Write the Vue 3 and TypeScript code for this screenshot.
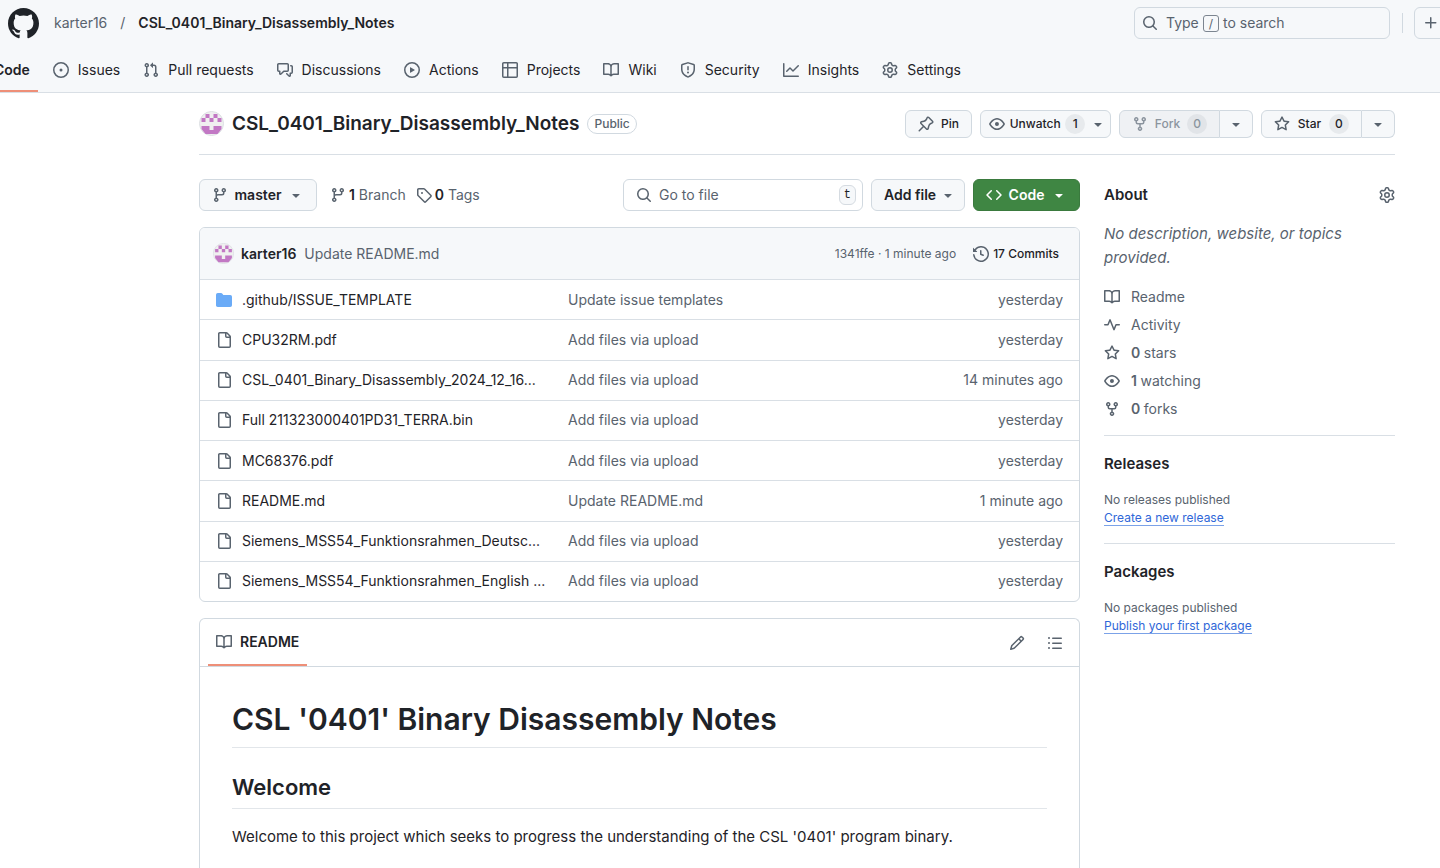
<script setup lang="ts">
import { h } from 'vue'

const paths: Record<string, string> = {
  issue: 'M8 9.5a1.5 1.5 0 1 0 0-3 1.5 1.5 0 0 0 0 3ZM8 0a8 8 0 1 1 0 16A8 8 0 0 1 8 0ZM1.5 8a6.5 6.5 0 1 0 13 0 6.5 6.5 0 0 0-13 0Z',
  pull: 'M1.5 3.25a2.25 2.25 0 1 1 3 2.122v5.256a2.251 2.251 0 1 1-1.5 0V5.372A2.25 2.25 0 0 1 1.5 3.25Zm5.677-.177L9.573.677A.25.25 0 0 1 10 .854V2.5h1A2.5 2.5 0 0 1 13.5 5v5.628a2.251 2.251 0 1 1-1.5 0V5a1 1 0 0 0-1-1h-1v1.646a.25.25 0 0 1-.427.177L7.177 3.427a.25.25 0 0 1 0-.354ZM3.75 2.5a.75.75 0 1 0 0 1.5.75.75 0 0 0 0-1.5Zm0 9.5a.75.75 0 1 0 0 1.5.75.75 0 0 0 0-1.5Zm8.25.75a.75.75 0 1 0 1.5 0 .75.75 0 0 0-1.5 0Z',
  discussion: 'M1.75 1h8.5c.966 0 1.75.784 1.75 1.75v5.5A1.75 1.75 0 0 1 10.25 10H7.061l-2.574 2.573A1.458 1.458 0 0 1 2 11.543V10h-.25A1.75 1.75 0 0 1 0 8.25v-5.5C0 1.784.784 1 1.75 1ZM1.5 2.75v5.5c0 .138.112.25.25.25h1a.75.75 0 0 1 .75.75v2.19l2.72-2.72a.749.749 0 0 1 .53-.22h3.5a.25.25 0 0 0 .25-.25v-5.5a.25.25 0 0 0-.25-.25h-8.5a.25.25 0 0 0-.25.25Zm13 2a.25.25 0 0 0-.25-.25h-.5a.75.75 0 0 1 0-1.5h.5c.966 0 1.75.784 1.75 1.75v5.5A1.75 1.75 0 0 1 14.25 12H14v1.543a1.458 1.458 0 0 1-2.487 1.03L9.22 12.28a.749.749 0 0 1 .326-1.275.749.749 0 0 1 .734.215l2.22 2.22v-2.19a.75.75 0 0 1 .75-.75h1a.25.25 0 0 0 .25-.25Z',
  play: 'M8 0a8 8 0 1 1 0 16A8 8 0 0 1 8 0ZM1.5 8a6.5 6.5 0 1 0 13 0 6.5 6.5 0 0 0-13 0Zm4.879-2.773 4.264 2.559a.25.25 0 0 1 0 .428l-4.264 2.559A.25.25 0 0 1 6 10.559V5.442a.25.25 0 0 1 .379-.215Z',
  table: 'M0 1.75C0 .784.784 0 1.75 0h12.5C15.216 0 16 .784 16 1.75v12.5A1.75 1.75 0 0 1 14.25 16H1.75A1.75 1.75 0 0 1 0 14.25ZM6.5 6.5v8h7.75a.25.25 0 0 0 .25-.25V6.5Zm8-1.5V1.75a.25.25 0 0 0-.25-.25H6.5V5Zm-13 1.5v7.75c0 .138.112.25.25.25H5v-8ZM5 5V1.5H1.75a.25.25 0 0 0-.25.25V5Z',
  book: 'M0 1.75A.75.75 0 0 1 .75 1h4.253c1.227 0 2.317.59 3 1.501A3.743 3.743 0 0 1 11.006 1h4.245a.75.75 0 0 1 .75.75v10.5a.75.75 0 0 1-.75.75h-4.507a2.25 2.25 0 0 0-1.591.659l-.622.621a.75.75 0 0 1-1.06 0l-.622-.621A2.25 2.25 0 0 0 5.258 13H.75a.75.75 0 0 1-.75-.75Zm7.251 10.324.004-5.073-.002-2.253A2.25 2.25 0 0 0 5.003 2.5H1.5v9h3.757a3.75 3.75 0 0 1 1.994.574ZM8.755 4.75l-.004 7.322a3.752 3.752 0 0 1 1.992-.572H14.5v-9h-3.495a2.25 2.25 0 0 0-2.25 2.25Z',
  shield: 'M7.467.133a1.748 1.748 0 0 1 1.066 0l5.25 1.68A1.75 1.75 0 0 1 15 3.48V7c0 1.566-.32 3.182-1.303 4.682-.983 1.498-2.585 2.813-5.032 3.855a1.697 1.697 0 0 1-1.33 0c-2.447-1.042-4.049-2.357-5.032-3.855C1.32 10.182 1 8.566 1 7V3.48a1.75 1.75 0 0 1 1.217-1.667Zm.61 1.429a.25.25 0 0 0-.153 0l-5.25 1.68a.25.25 0 0 0-.174.238V7c0 1.358.275 2.666 1.057 3.86.784 1.194 2.121 2.34 4.366 3.297a.196.196 0 0 0 .154 0c2.245-.956 3.582-2.104 4.366-3.298C13.225 9.666 13.5 8.36 13.5 7V3.48a.251.251 0 0 0-.174-.237l-5.25-1.68ZM8.75 4.75v3a.75.75 0 0 1-1.5 0v-3a.75.75 0 0 1 1.5 0ZM9 10.5a1 1 0 1 1-2 0 1 1 0 0 1 2 0Z',
  graph: 'M1.5 1.75V13.5h13.75a.75.75 0 0 1 0 1.5H.75a.75.75 0 0 1-.75-.75V1.75a.75.75 0 0 1 1.5 0Zm14.28 2.53-5.25 5.25a.75.75 0 0 1-1.06 0L7 7.06 4.28 9.78a.751.751 0 0 1-1.042-.018.751.751 0 0 1-.018-1.042l3.25-3.25a.75.75 0 0 1 1.06 0L10 7.94l4.72-4.72a.751.751 0 0 1 1.042.018.751.751 0 0 1 .018 1.042Z',
  gear: 'M8 0a8.2 8.2 0 0 1 .701.031C9.444.095 9.99.645 10.16 1.29l.288 1.107c.018.066.079.158.212.224.231.114.454.243.668.386.123.082.233.09.299.071l1.103-.303c.644-.176 1.392.021 1.82.63.27.385.506.792.704 1.218.315.675.111 1.422-.364 1.891l-.814.806c-.049.048-.098.147-.088.294.016.257.016.515 0 .772-.01.147.038.246.088.294l.814.806c.475.469.679 1.216.364 1.891a7.977 7.977 0 0 1-.704 1.217c-.428.61-1.176.807-1.82.63l-1.102-.302c-.067-.019-.177-.011-.3.071a5.909 5.909 0 0 1-.668.386c-.133.066-.194.158-.211.224l-.29 1.106c-.168.646-.715 1.196-1.458 1.26a8.006 8.006 0 0 1-1.402 0c-.743-.064-1.289-.614-1.458-1.26l-.289-1.106c-.018-.066-.079-.158-.212-.224a5.738 5.738 0 0 1-.668-.386c-.123-.082-.233-.09-.299-.071l-1.103.303c-.644.176-1.392-.021-1.82-.63a8.12 8.12 0 0 1-.704-1.218c-.315-.675-.111-1.422.363-1.891l.815-.806c.05-.048.098-.147.088-.294a6.214 6.214 0 0 1 0-.772c.01-.147-.038-.246-.088-.294l-.815-.806C.635 6.045.431 5.298.746 4.623a7.92 7.92 0 0 1 .704-1.217c.428-.61 1.176-.807 1.82-.63l1.102.302c.067.019.177.011.3-.071.214-.143.437-.272.668-.386.133-.066.194-.158.211-.224l.29-1.106C6.009.645 6.556.095 7.299.03 7.53.01 7.764 0 8 0Zm-.571 1.525c-.036.003-.108.036-.137.146l-.289 1.105c-.147.561-.549.967-.998 1.189-.173.086-.34.183-.5.29-.417.278-.97.423-1.529.27l-1.103-.303c-.109-.03-.175.016-.195.045-.22.312-.412.644-.573.99-.014.031-.021.11.059.19l.815.806c.411.406.562.957.53 1.456a4.709 4.709 0 0 0 0 .582c.032.499-.119 1.05-.53 1.456l-.815.806c-.081.08-.073.159-.059.19.162.346.353.677.573.989.02.03.085.076.195.046l1.102-.303c.56-.153 1.113-.008 1.53.27.161.107.328.204.501.29.447.222.85.629.997 1.189l.289 1.105c.029.109.101.143.137.146a6.6 6.6 0 0 0 1.142 0c.036-.003.108-.036.137-.146l.289-1.105c.147-.561.549-.967.998-1.189.173-.086.34-.183.5-.29.417-.278.97-.423 1.529-.27l1.103.303c.109.029.175-.016.195-.045.22-.313.411-.644.573-.99.014-.031.021-.11-.059-.19l-.815-.806c-.411-.406-.562-.957-.53-1.456a4.709 4.709 0 0 0 0-.582c-.032-.499.119-1.05.53-1.456l.815-.806c.081-.08.073-.159.059-.19a6.464 6.464 0 0 0-.573-.989c-.02-.03-.085-.076-.195-.046l-1.102.303c-.56.153-1.113.008-1.53-.27a4.44 4.44 0 0 0-.501-.29c-.447-.222-.85-.629-.997-1.189l-.289-1.105c-.029-.11-.101-.143-.137-.146a6.6 6.6 0 0 0-1.142 0ZM11 8a3 3 0 1 1-6 0 3 3 0 0 1 6 0ZM9.5 8a1.5 1.5 0 1 0-3.001.001A1.5 1.5 0 0 0 9.5 8Z',
  search: 'M10.68 11.74a6 6 0 0 1-7.922-8.982 6 6 0 0 1 8.982 7.922l3.04 3.04a.749.749 0 0 1-.326 1.275.749.749 0 0 1-.734-.215ZM11.5 7a4.499 4.499 0 1 0-8.997 0A4.499 4.499 0 0 0 11.5 7Z',
  plus: 'M7.75 2a.75.75 0 0 1 .75.75V7h4.25a.75.75 0 0 1 0 1.5H8.5v4.25a.75.75 0 0 1-1.5 0V8.5H2.75a.75.75 0 0 1 0-1.5H7V2.75A.75.75 0 0 1 7.75 2Z',
  pin: 'm11.294.984 3.722 3.722a1.75 1.75 0 0 1-.504 2.826l-1.327.613a3.089 3.089 0 0 0-1.707 2.084l-.584 2.454c-.317 1.332-1.972 1.8-2.94.832L5.75 11.311 1.78 15.28a.749.749 0 1 1-1.06-1.06l3.969-3.97-2.204-2.204c-.968-.968-.5-2.623.832-2.94l2.454-.584a3.08 3.08 0 0 0 2.084-1.707l.613-1.327a1.75 1.75 0 0 1 2.826-.504ZM6.283 9.723l2.732 2.731a.25.25 0 0 0 .42-.119l.584-2.454a4.586 4.586 0 0 1 2.537-3.098l1.328-.613a.25.25 0 0 0 .072-.404l-3.722-3.722a.25.25 0 0 0-.404.072l-.613 1.328a4.584 4.584 0 0 1-3.098 2.537l-2.454.584a.25.25 0 0 0-.119.42l2.731 2.732Z',
  eye: 'M8 2c1.981 0 3.671.992 4.933 2.078 1.27 1.091 2.187 2.345 2.637 3.023a1.62 1.62 0 0 1 0 1.798c-.45.678-1.367 1.932-2.637 3.023C11.67 13.008 9.981 14 8 14c-1.981 0-3.671-.992-4.933-2.078C1.797 10.83.88 9.576.43 8.898a1.62 1.62 0 0 1 0-1.798c.45-.677 1.367-1.931 2.637-3.022C4.33 2.992 6.019 2 8 2ZM1.679 7.932a.12.12 0 0 0 0 .136c.411.622 1.241 1.75 2.366 2.717C5.176 11.758 6.527 12.5 8 12.5c1.473 0 2.825-.742 3.955-1.715 1.124-.967 1.954-2.096 2.366-2.717a.12.12 0 0 0 0-.136c-.412-.621-1.242-1.75-2.366-2.717C10.824 4.242 9.473 3.5 8 3.5c-1.473 0-2.825.742-3.955 1.715-1.124.967-1.954 2.096-2.366 2.717ZM8 10a2 2 0 1 1-.001-3.999A2 2 0 0 1 8 10Z',
  fork: 'M5 5.372v.878c0 .414.336.75.75.75h4.5a.75.75 0 0 0 .75-.75v-.878a2.25 2.25 0 1 1 1.5 0v.878a2.25 2.25 0 0 1-2.25 2.25h-1.5v2.128a2.251 2.251 0 1 1-1.5 0V8.5h-1.5A2.25 2.25 0 0 1 3.5 6.25v-.878a2.25 2.25 0 1 1 1.5 0ZM5 3.25a.75.75 0 1 0-1.5 0 .75.75 0 0 0 1.5 0Zm6.75.75a.75.75 0 1 0 0-1.5.75.75 0 0 0 0 1.5Zm-3 8.75a.75.75 0 1 0-1.5 0 .75.75 0 0 0 1.5 0Z',
  star: 'M8 .25a.75.75 0 0 1 .673.418l1.882 3.815 4.21.612a.75.75 0 0 1 .416 1.279l-3.046 2.97.719 4.192a.751.751 0 0 1-1.088.791L8 12.347l-3.766 1.98a.75.75 0 0 1-1.088-.79l.72-4.194L.818 6.374a.75.75 0 0 1 .416-1.28l4.21-.611L7.327.668A.75.75 0 0 1 8 .25Zm0 2.445L6.615 5.5a.75.75 0 0 1-.564.41l-3.097.45 2.24 2.184a.75.75 0 0 1 .216.664l-.528 3.084 2.769-1.456a.75.75 0 0 1 .698 0l2.77 1.456-.53-3.084a.75.75 0 0 1 .216-.664l2.24-2.183-3.096-.45a.75.75 0 0 1-.564-.41L8 2.694Z',
  branch: 'M9.5 3.25a2.25 2.25 0 1 1 3 2.122V6A2.5 2.5 0 0 1 10 8.5H6a1 1 0 0 0-1 1v1.128a2.251 2.251 0 1 1-1.5 0V5.372a2.25 2.25 0 1 1 1.5 0v1.836A2.493 2.493 0 0 1 6 7h4a1 1 0 0 0 1-1v-.628A2.25 2.25 0 0 1 9.5 3.25Zm-6 0a.75.75 0 1 0 1.5 0 .75.75 0 0 0-1.5 0Zm8.25-.75a.75.75 0 1 0 0 1.5.75.75 0 0 0 0-1.5ZM4.25 12a.75.75 0 1 0 0 1.5.75.75 0 0 0 0-1.5Z',
  tag: 'M1 7.775V2.75C1 1.784 1.784 1 2.75 1h5.025c.464 0 .91.184 1.238.513l6.25 6.25a1.75 1.75 0 0 1 0 2.474l-5.026 5.026a1.75 1.75 0 0 1-2.474 0l-6.25-6.25A1.752 1.752 0 0 1 1 7.775Zm1.5 0c0 .066.026.13.073.177l6.25 6.25a.25.25 0 0 0 .354 0l5.025-5.025a.25.25 0 0 0 0-.354l-6.25-6.25a.25.25 0 0 0-.177-.073H2.75a.25.25 0 0 0-.25.25ZM6 5a1 1 0 1 1 0 2 1 1 0 0 1 0-2Z',
  code: 'm11.28 3.22 4.25 4.25a.75.75 0 0 1 0 1.06l-4.25 4.25a.749.749 0 0 1-1.275-.326.749.749 0 0 1 .215-.734L13.94 8l-3.72-3.72a.749.749 0 0 1 .326-1.275.749.749 0 0 1 .734.215Zm-6.56 0a.751.751 0 0 1 1.042.018.751.751 0 0 1 .018 1.042L2.06 8l3.72 3.72a.749.749 0 0 1-.326 1.275.749.749 0 0 1-.734-.215L.47 8.53a.75.75 0 0 1 0-1.06Z',
  history: 'm.427 1.927 1.215 1.215a8.002 8.002 0 1 1-1.6 5.685.75.75 0 1 1 1.493-.154 6.5 6.5 0 1 0 1.18-4.458l1.358 1.358A.25.25 0 0 1 3.896 6H.25A.25.25 0 0 1 0 5.75V2.104a.25.25 0 0 1 .427-.177ZM7.75 4a.75.75 0 0 1 .75.75v2.992l2.028.812a.75.75 0 0 1-.557 1.392l-2.5-1A.751.751 0 0 1 7 8.25v-3.5A.75.75 0 0 1 7.75 4Z',
  file: 'M2 1.75C2 .784 2.784 0 3.75 0h6.586c.464 0 .909.184 1.237.513l2.914 2.914c.329.328.513.773.513 1.237v9.586A1.75 1.75 0 0 1 13.25 16h-9.5A1.75 1.75 0 0 1 2 14.25Zm1.75-.25a.25.25 0 0 0-.25.25v12.5c0 .138.112.25.25.25h9.5a.25.25 0 0 0 .25-.25V6h-2.75A1.75 1.75 0 0 1 9 4.25V1.5Zm6.75.062V4.25c0 .138.112.25.25.25h2.688l-.011-.013-2.914-2.914-.013-.011Z',
  folder: 'M1.75 1A1.75 1.75 0 0 0 0 2.75v10.5C0 14.216.784 15 1.75 15h12.5A1.75 1.75 0 0 0 16 13.25v-8.5A1.75 1.75 0 0 0 14.25 3H7.5a.25.25 0 0 1-.2-.1l-.9-1.2C6.07 1.26 5.55 1 5 1H1.75Z',
  pulse: 'M6 2c.306 0 .582.187.696.471L10 10.731l1.304-3.26A.751.751 0 0 1 12 7h3.25a.75.75 0 0 1 0 1.5h-2.742l-1.812 4.528a.751.751 0 0 1-1.392 0L6 4.77 4.696 8.03A.75.75 0 0 1 4 8.5H.75a.75.75 0 0 1 0-1.5h2.742l1.812-4.529A.751.751 0 0 1 6 2Z',
  pencil: 'M11.013 1.427a1.75 1.75 0 0 1 2.474 0l1.086 1.086a1.75 1.75 0 0 1 0 2.474l-8.61 8.61c-.21.21-.47.364-.756.445l-3.251.93a.75.75 0 0 1-.927-.928l.929-3.25c.081-.286.235-.547.445-.758l8.61-8.61Zm.176 4.823L9.75 4.81l-6.286 6.287a.253.253 0 0 0-.064.108l-.558 1.953 1.953-.558a.253.253 0 0 0 .108-.064Zm1.238-3.763a.25.25 0 0 0-.354 0L10.811 3.75l1.439 1.44 1.263-1.263a.25.25 0 0 0 0-.354Z',
  list: 'M5.75 2.5h8.5a.75.75 0 0 1 0 1.5h-8.5a.75.75 0 0 1 0-1.5Zm0 5h8.5a.75.75 0 0 1 0 1.5h-8.5a.75.75 0 0 1 0-1.5Zm0 5h8.5a.75.75 0 0 1 0 1.5h-8.5a.75.75 0 0 1 0-1.5ZM2 14a1 1 0 1 1 0-2 1 1 0 0 1 0 2Zm1-6a1 1 0 1 1-2 0 1 1 0 0 1 2 0ZM2 4a1 1 0 1 1 0-2 1 1 0 0 1 0 2Z',
  caret: 'm4.427 7.427 3.396 3.396a.25.25 0 0 0 .354 0l3.396-3.396A.25.25 0 0 0 11.396 7H4.604a.25.25 0 0 0-.177.427Z',
}

const Icon = (props: { name: string }) =>
  h('svg', { class: 'icon', viewBox: '0 0 16 16', width: 16, height: 16, 'aria-hidden': 'true' }, [
    h('path', { d: paths[props.name] }),
  ])
Icon.props = ['name']

const Avatar = (props: { size: number }) =>
  h('svg', { class: 'avatar', viewBox: '0 0 25 25', width: props.size, height: props.size, 'aria-hidden': 'true' }, [
    h('circle', { cx: 12.5, cy: 12.5, r: 12, fill: '#f0f0f0', stroke: '#dcdfe3' }),
    h('path', {
      fill: '#c278c4',
      d: 'M6.5 3h4v4h-4zM14.5 3h4v4h-4zM2.5 7h4v4h-4zM10.5 7h4v4h-4zM18.5 7h4v4h-4zM2.5 15h8v4h4v-4h8v3L18.5 23h-12L2.5 18z',
    }),
  ])
Avatar.props = ['size']

const tabs = [
  { icon: 'issue', label: 'Issues' },
  { icon: 'pull', label: 'Pull requests' },
  { icon: 'discussion', label: 'Discussions' },
  { icon: 'play', label: 'Actions' },
  { icon: 'table', label: 'Projects' },
  { icon: 'book', label: 'Wiki' },
  { icon: 'shield', label: 'Security' },
  { icon: 'graph', label: 'Insights' },
  { icon: 'gear', label: 'Settings' },
]

const files = [
  { name: '.github/ISSUE_TEMPLATE', message: 'Update issue templates', age: 'yesterday', folder: true },
  { name: 'CPU32RM.pdf', message: 'Add files via upload', age: 'yesterday' },
  { name: 'CSL_0401_Binary_Disassembly_2024_12_16...', message: 'Add files via upload', age: '14 minutes ago' },
  { name: 'Full 211323000401PD31_TERRA.bin', message: 'Add files via upload', age: 'yesterday' },
  { name: 'MC68376.pdf', message: 'Add files via upload', age: 'yesterday' },
  { name: 'README.md', message: 'Update README.md', age: '1 minute ago' },
  { name: 'Siemens_MSS54_Funktionsrahmen_Deutsc...', message: 'Add files via upload', age: 'yesterday' },
  { name: 'Siemens_MSS54_Funktionsrahmen_English ...', message: 'Add files via upload', age: 'yesterday' },
]

const facts = [
  { icon: 'book', count: '', label: 'Readme' },
  { icon: 'pulse', count: '', label: 'Activity' },
  { icon: 'star', count: '0', label: 'stars' },
  { icon: 'eye', count: '1', label: 'watching' },
  { icon: 'fork', count: '0', label: 'forks' },
]
</script>

<template>
  <div class="page">
    <header class="top">
      <div class="bar">
        <a class="logo" href="#" aria-label="Homepage">
          <svg viewBox="1 1 22 22" width="31" height="31" aria-hidden="true">
            <path d="M12 1C5.923 1 1 5.923 1 12c0 4.867 3.149 8.979 7.521 10.436.55.096.756-.233.756-.522 0-.262-.013-1.128-.013-2.049-2.764.509-3.479-.674-3.699-1.292-.124-.317-.66-1.293-1.127-1.554-.385-.207-.936-.715-.014-.729.866-.014 1.485.797 1.691 1.128.99 1.663 2.571 1.196 3.204.907.096-.715.385-1.196.701-1.471-2.448-.275-5.005-1.224-5.005-5.432 0-1.196.426-2.186 1.128-2.956-.111-.275-.496-1.402.11-2.915 0 0 .921-.288 3.024 1.128a10.193 10.193 0 0 1 2.75-.371c.936 0 1.871.123 2.75.371 2.104-1.43 3.025-1.128 3.025-1.128.605 1.513.221 2.64.111 2.915.701.77 1.127 1.747 1.127 2.956 0 4.222-2.571 5.157-5.019 5.432.399.344.743 1.004.743 2.035 0 1.471-.014 2.654-.014 3.025 0 .289.206.632.756.522C19.851 20.979 23 16.854 23 12c0-6.077-4.922-11-11-11Z" />
          </svg>
        </a>
        <nav class="crumbs" aria-label="Breadcrumb">
          <a href="#">karter16</a>
          <span class="slash">/</span>
          <a href="#" class="current">CSL_0401_Binary_Disassembly_Notes</a>
        </nav>
        <button type="button" class="global-search">
          <Icon name="search" />
          <span>Type <kbd>/</kbd> to search</span>
        </button>
        <span class="divider"></span>
        <button type="button" class="create" aria-label="Create new"><Icon name="plus" /></button>
      </div>
      <nav class="tabs" aria-label="Repository">
        <a href="#" class="tab active">Code</a>
        <a v-for="tab in tabs" :key="tab.label" href="#" class="tab">
          <Icon :name="tab.icon" />{{ tab.label }}
        </a>
      </nav>
    </header>

    <div class="container">
      <div class="title-row">
        <Avatar :size="25" />
        <h1>CSL_0401_Binary_Disassembly_Notes</h1>
        <span class="badge">Public</span>
        <div class="actions">
          <button type="button" class="btn small pin"><Icon name="pin" />Pin</button>
          <button type="button" class="btn small watch">
            <Icon name="eye" />Unwatch<span class="counter">1</span><Icon name="caret" />
          </button>
          <div class="group">
            <button type="button" class="btn small main-part" disabled>
              <Icon name="fork" />Fork<span class="counter">0</span>
            </button>
            <button type="button" class="btn small drop" aria-label="See your forks"><Icon name="caret" /></button>
          </div>
          <div class="group">
            <button type="button" class="btn small main-part star">
              <Icon name="star" />Star<span class="counter">0</span>
            </button>
            <button type="button" class="btn small drop" aria-label="Star lists"><Icon name="caret" /></button>
          </div>
        </div>
      </div>

      <div class="columns">
        <main>
          <div class="toolbar">
            <button type="button" class="btn branch"><Icon name="branch" />master<Icon name="caret" /></button>
            <div class="refs">
              <a href="#"><Icon name="branch" /><span><b>1</b> Branch</span></a>
              <a href="#"><Icon name="tag" /><span><b>0</b> Tags</span></a>
            </div>
            <label class="finder">
              <Icon name="search" />
              <input type="text" placeholder="Go to file" aria-label="Go to file" />
              <kbd>t</kbd>
            </label>
            <button type="button" class="btn add">Add file<Icon name="caret" /></button>
            <button type="button" class="btn primary"><Icon name="code" />Code<Icon name="caret" /></button>
          </div>

          <section class="files">
            <div class="commit">
              <Avatar :size="21" />
              <a href="#" class="author">karter16</a>
              <a href="#" class="message">Update README.md</a>
              <span class="meta">1341ffe · 1 minute ago</span>
              <a href="#" class="history"><Icon name="history" />17 Commits</a>
            </div>
            <table aria-label="Files">
              <tbody>
                <tr v-for="file in files" :key="file.name">
                  <td class="name">
                    <a href="#">
                      <Icon :name="file.folder ? 'folder' : 'file'" :class="{ folder: file.folder }" />{{ file.name }}
                    </a>
                  </td>
                  <td class="note"><a href="#">{{ file.message }}</a></td>
                  <td class="age">{{ file.age }}</td>
                </tr>
              </tbody>
            </table>
          </section>

          <section class="readme">
            <div class="readme-bar">
              <a href="#" class="readme-tab"><Icon name="book" />README</a>
              <div class="readme-tools">
                <button type="button" aria-label="Edit file"><Icon name="pencil" /></button>
                <button type="button" aria-label="Outline"><Icon name="list" /></button>
              </div>
            </div>
            <article>
              <h2 class="doc-title">CSL '0401' Binary Disassembly Notes</h2>
              <h3 class="doc-heading">Welcome</h3>
              <p>Welcome to this project which seeks to progress the understanding of the CSL '0401' program binary.</p>
            </article>
          </section>
        </main>

        <aside>
          <section class="about">
            <div class="about-head">
              <h2>About</h2>
              <button type="button" aria-label="Edit repository details"><Icon name="gear" /></button>
            </div>
            <p class="blurb">No description, website, or topics provided.</p>
            <ul>
              <li v-for="fact in facts" :key="fact.label">
                <a href="#"><Icon :name="fact.icon" /><span><b v-if="fact.count">{{ fact.count }}&nbsp;</b>{{ fact.label }}</span></a>
              </li>
            </ul>
          </section>
          <section class="side">
            <h2>Releases</h2>
            <p>No releases published</p>
            <a href="#">Create a new release</a>
          </section>
          <section class="side">
            <h2>Packages</h2>
            <p>No packages published</p>
            <a href="#">Publish your first package</a>
          </section>
        </aside>
      </div>
    </div>
  </div>
</template>

<style>
body {
  margin: 0;
  background: #fff;
}
</style>

<style scoped>
.page {
  display: flex;
  flex-direction: column;
  min-height: 100vh;
  overflow: hidden;
  color: #1f2328;
  font: 14px/20px Inter, "Liberation Sans", sans-serif;
}
.page * {
  box-sizing: border-box;
}
a {
  color: inherit;
  text-decoration: none;
}
h1, h2, h3, p, ul {
  margin: 0;
  padding: 0;
}
ul {
  list-style: none;
}
h1, h2, h3, b {
  font-weight: 600;
}
button, input {
  font: inherit;
  color: inherit;
}
button {
  padding: 0;
  border: 0;
  background: none;
}
.icon {
  flex: none;
  fill: #59636e;
}
.avatar {
  flex: none;
}

/* Header */
.top {
  background: #f6f8fa;
  border-bottom: 1px solid #d9dfe5;
}
.bar {
  display: flex;
  align-items: center;
  height: 46px;
  padding-left: 8px;
}
.logo {
  display: flex;
  margin-right: 15px;
}
.logo svg {
  fill: #1f2328;
}
.crumbs {
  display: flex;
  gap: 13px;
  color: #59636e;
}
.crumbs .current {
  color: #1f2328;
  font-weight: 600;
}
.global-search {
  display: flex;
  align-items: center;
  gap: 8px;
  width: 256px;
  height: 32px;
  margin-left: auto;
  padding: 0 7px;
  border: 1px solid #d1d9e0;
  border-radius: 6px;
  color: #59636e;
}
.global-search kbd {
  padding: 0 5px;
  border: 1px solid #7c8590;
  border-radius: 3px;
  font: 12px/16px Inter, sans-serif;
}
.divider {
  width: 1px;
  height: 20px;
  margin: 0 11px 0 12px;
  background: #d1d9e0;
}
.create {
  display: flex;
  align-items: center;
  width: 58px;
  height: 32px;
  margin-right: -32px;
  padding: 0 8px;
  border: 1px solid #d1d9e0;
  border-radius: 6px;
}
.tabs {
  display: flex;
  gap: 7px;
  height: 46px;
  margin-left: -14px;
  padding-top: 4px;
}
.tab {
  display: flex;
  align-items: center;
  gap: 9px;
  padding: 0 8px;
  border-bottom: 2px solid transparent;
  white-space: nowrap;
}
.tab.active {
  border-color: #ee8f78;
  font-weight: 600;
}

/* Repository title */
.container {
  display: flex;
  flex: 1;
  flex-direction: column;
  margin: 0 45px 0 199px;
}
.title-row {
  display: flex;
  align-items: center;
  height: 62px;
  border-bottom: 1px solid #d9dfe5;
  gap: 8px;
}
.title-row h1 {
  font-size: 19px;
  line-height: 30px;
}
.badge {
  padding: 0 6px;
  border: 1px solid #d1d9e0;
  border-radius: 10px;
  color: #59636e;
  font-size: 12px;
  line-height: 18px;
  font-weight: 500;
}
.actions {
  display: flex;
  gap: 8px;
  margin-left: auto;
}
.btn {
  display: flex;
  align-items: center;
  justify-content: space-between;
  height: 32px;
  padding: 0 12px;
  border: 1px solid #d1d9e0;
  border-radius: 6px;
  background: #f6f8fa;
  font-weight: 600;
  white-space: nowrap;
}
.btn.small {
  height: 28px;
  font-size: 12px;
  font-weight: 500;
}
.pin {
  width: 67px;
}
.btn.watch {
  width: 131px;
  padding: 0 4px 0 8px;
}
.counter {
  min-width: 20px;
  padding: 0 6px;
  border-radius: 10px;
  background: #e7eaed;
  line-height: 20px;
  text-align: center;
}
.group {
  display: flex;
}
.btn.main-part {
  width: 101px;
  border-radius: 6px 0 0 6px;
}
.btn.drop {
  width: 33px;
  padding: 0 8px;
  border-left: 0;
  border-radius: 0 6px 6px 0;
}
.btn:disabled {
  background: #eff1f4;
  color: #8b949e;
}
.btn:disabled .counter {
  background: #e1e4e8;
}
.btn:disabled .icon {
  fill: #8b949e;
}

/* Two columns */
.columns {
  display: grid;
  flex: 1;
  grid-template-columns: 1fr 291px;
  gap: 24px;
  padding-top: 24px;
}
main {
  display: flex;
  flex-direction: column;
  gap: 16px;
  min-width: 0;
}
.toolbar {
  display: flex;
  align-items: center;
  gap: 8px;
}
.branch {
  width: 118px;
}
.refs {
  display: flex;
  gap: 10px;
  margin-left: 5px;
  color: #59636e;
}
.refs a {
  display: flex;
  align-items: center;
  gap: 3px;
}
.refs b {
  color: #1f2328;
}
.finder {
  display: flex;
  align-items: center;
  gap: 7px;
  width: 240px;
  height: 32px;
  margin-left: auto;
  padding: 0 6px 0 12px;
  border: 1px solid #d1d9e0;
  border-radius: 6px;
}
.finder input {
  flex: 1;
  min-width: 0;
  padding: 0;
  border: 0;
  outline: 0;
  background: none;
}
.finder input::placeholder {
  color: #59636e;
  opacity: 1;
}
.finder kbd {
  padding: 0 4px;
  border: 1px solid #d5dbe1;
  border-radius: 6px;
  background: #f6f8fa;
  font: 12px/18px "Liberation Mono", monospace;
}
.btn.add {
  width: 94px;
  padding-right: 8px;
}
.btn.primary {
  width: 107px;
  border-color: #3a7a3e;
  background: #3f8643;
  color: #fff;
}
.btn.primary .icon {
  fill: #fff;
}

/* File list */
.files {
  border: 1px solid #d1d9e0;
  border-radius: 6px;
  overflow: hidden;
}
.commit {
  display: flex;
  align-items: center;
  height: 51px;
  padding: 0 20px 0 13px;
  background: #f6f8fa;
}
.commit .author {
  margin: 0 8px 0 7px;
  font-weight: 600;
}
.commit .message {
  color: #59636e;
}
.commit .meta {
  margin-left: auto;
  color: #59636e;
  font-size: 12px;
}
.commit .history {
  display: flex;
  align-items: center;
  gap: 4px;
  margin-left: 17px;
  font-size: 12px;
  font-weight: 500;
}
table {
  width: 100%;
  height: 322px;
  border-collapse: separate;
  border-spacing: 0;
  table-layout: fixed;
}
td {
  padding: 0 16px;
  border-top: 1px solid #d9dfe5;
  color: #59636e;
  white-space: nowrap;
}
.name {
  width: 352px;
  color: #1f2328;
}
.name a {
  display: flex;
  align-items: center;
  gap: 10px;
}
.name .folder {
  fill: #6aabf7;
}
.age {
  width: 140px;
  text-align: right;
}

/* Readme */
.readme {
  flex: 1;
  border: 1px solid #d1d9e0;
  border-bottom: 0;
  border-radius: 6px 6px 0 0;
}
.readme-bar {
  display: flex;
  justify-content: space-between;
  height: 48px;
  padding: 0 8px;
  border-bottom: 1px solid #d1d9e0;
}
.readme-tab {
  display: flex;
  align-items: center;
  gap: 8px;
  padding: 0 8px;
  border-bottom: 2px solid #ee8f78;
  font-weight: 600;
}
.readme-tools {
  display: flex;
  align-items: center;
  gap: 22px;
  padding: 0 8px;
}
.readme-tools button {
  display: flex;
}
article {
  padding: 32px;
}
.doc-title {
  padding-bottom: 8px;
  border-bottom: 1px solid #e2e6ea;
  font-size: 30px;
  line-height: 40px;
}
.doc-heading {
  margin: 24px 0 16px;
  padding-bottom: 6px;
  border-bottom: 1px solid #e2e6ea;
  font-size: 22px;
  line-height: 30px;
}
article p {
  font-size: 15px;
  line-height: 24px;
}

/* Sidebar */
aside h2 {
  font-size: 15px;
  line-height: 24px;
}
.about {
  padding: 4px 0 16px;
}
.about-head {
  display: flex;
  align-items: center;
  justify-content: space-between;
}
.about-head button {
  display: flex;
}
.blurb {
  margin: 15px 0 17px;
  padding-right: 40px;
  color: #59636e;
  font-size: 15px;
  line-height: 24px;
  font-style: italic;
}
.about li {
  color: #59636e;
  line-height: 20px;
}
.about li + li {
  margin-top: 8px;
}
.about li a {
  display: flex;
  align-items: center;
  gap: 11px;
}
.side {
  padding: 16px 0;
  border-top: 1px solid #d9dfe5;
  font-size: 12px;
  line-height: 18px;
}
.side h2 {
  margin-bottom: 15px;
}
.side p {
  color: #59636e;
}
.side a {
  border-bottom: 1px solid #7ba2e8;
  color: #2f67d8;
}
</style>
